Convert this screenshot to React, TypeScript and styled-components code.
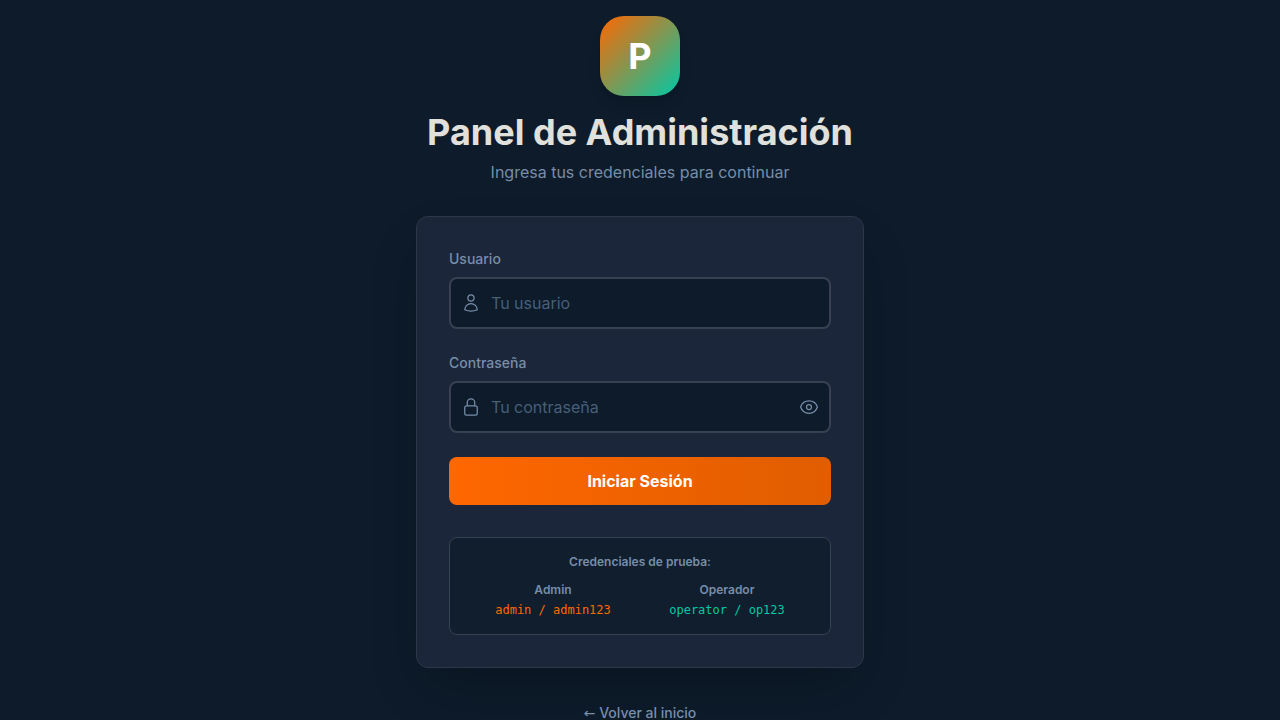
import React, { useState } from "react";
import styled, { createGlobalStyle } from "styled-components";

const GlobalStyle = createGlobalStyle`
  *, *::before, *::after { box-sizing: border-box; }
  body {
    margin: 0;
    background: #0d1b2a;
    color: #e0e1dd;
    font-family: Inter, "Liberation Sans", sans-serif;
    font-size: 16px;
    line-height: 24px;
  }
  h1, p { margin: 0; }
`;

const Page = styled.main`
  min-height: 100vh;
  display: flex;
  align-items: center;
  justify-content: center;
  padding: 16px;
`;

const Content = styled.div`
  width: 100%;
  max-width: 448px;
`;

const Header = styled.header`
  display: flex;
  flex-direction: column;
  align-items: center;
  text-align: center;
  margin-bottom: 32px;
`;

const Logo = styled.div`
  width: 80px;
  height: 80px;
  display: flex;
  align-items: center;
  justify-content: center;
  margin-bottom: 16px;
  border-radius: 24px;
  background: linear-gradient(to bottom right, #ff6700, #00c9a7);
  box-shadow: 0 10px 15px -3px rgba(0, 0, 0, 0.1), 0 4px 6px -4px rgba(0, 0, 0, 0.1);
  color: #ffffff;
  font-size: 36px;
  line-height: 40px;
  font-weight: 700;
`;

const Title = styled.h1`
  margin-bottom: 8px;
  font-size: 36px;
  line-height: 40px;
  font-weight: 700;
`;

const Subtitle = styled.p`
  color: #778da9;
`;

const Card = styled.section`
  padding: 32px;
  border: 1px solid #2d3748;
  border-radius: 12px;
  background: #1b263b;
  box-shadow: 0 25px 50px -12px rgba(0, 0, 0, 0.25);
`;

const Form = styled.form`
  display: flex;
  flex-direction: column;
  gap: 24px;
`;

const Field = styled.div`
  display: flex;
  flex-direction: column;
  gap: 8px;
`;

const Label = styled.label`
  color: #778da9;
  font-size: 14px;
  line-height: 20px;
  font-weight: 500;
`;

const InputBox = styled.div`
  display: flex;
  align-items: center;
  gap: 10px;
  height: 52px;
  padding: 0 10px;
  border: 2px solid #374151;
  border-radius: 8px;
  background: #0d1b2a;
  color: #778da9;
  &:focus-within { border-color: #ff6700; }
`;

const Input = styled.input`
  flex: 1;
  min-width: 0;
  height: 48px;
  padding: 0;
  border: 0;
  outline: 0;
  background: transparent;
  color: #e0e1dd;
  font: inherit;
  &::placeholder { color: #485f78; opacity: 1; }
`;

const IconButton = styled.button`
  display: flex;
  padding: 0;
  border: 0;
  background: transparent;
  color: inherit;
  cursor: pointer;
`;

const Submit = styled.button`
  height: 48px;
  border: 0;
  border-radius: 8px;
  background: linear-gradient(to right, #ff6700, #e05d00);
  color: #ffffff;
  font: inherit;
  font-weight: 700;
  cursor: pointer;
`;

const Hint = styled.div`
  margin-top: 32px;
  padding: 16px;
  border: 1px solid #374151;
  border-radius: 8px;
  background: #111e2d;
  color: #778da9;
  font-size: 12px;
  line-height: 16px;
  font-weight: 600;
  text-align: center;
`;

const Accounts = styled.div`
  display: flex;
  justify-content: space-around;
  margin-top: 12px;
`;

const Account = styled.div`
  display: flex;
  flex-direction: column;
  gap: 4px;
`;

const Credentials = styled.code<{ $color: string }>`
  color: ${({ $color }) => $color};
  font-family: "DejaVu Sans Mono", monospace;
  font-weight: 400;
`;

const Footer = styled.footer`
  margin-top: 32px;
  text-align: center;
`;

const BackLink = styled.a`
  color: #778da9;
  font-size: 14px;
  font-weight: 500;
  text-decoration: none;
`;

const Arrow = styled.span`
  font-family: "DejaVu Sans", sans-serif;
  font-weight: 400;
`;

const IconSvg = styled.svg`
  flex: none;
  width: 20px;
  height: 20px;
`;

const paths = {
  user: "M15.75 6a3.75 3.75 0 1 1-7.5 0 3.75 3.75 0 0 1 7.5 0ZM4.501 20.118a7.5 7.5 0 0 1 14.998 0A17.933 17.933 0 0 1 12 21.75c-2.676 0-5.216-.584-7.499-1.632Z",
  lock: "M16.5 10.5V6.75a4.5 4.5 0 1 0-9 0v3.75m-.75 11.25h10.5a2.25 2.25 0 0 0 2.25-2.25v-6.75a2.25 2.25 0 0 0-2.25-2.25H6.75a2.25 2.25 0 0 0-2.25 2.25v6.75a2.25 2.25 0 0 0 2.25 2.25Z",
  eye: "M2.036 12.322a1.012 1.012 0 0 1 0-.639C3.423 7.51 7.36 4.5 12 4.5c4.638 0 8.573 3.007 9.963 7.178.07.207.07.431 0 .639C20.577 16.49 16.64 19.5 12 19.5c-4.638 0-8.573-3.007-9.963-7.178ZM15 12a3 3 0 1 1-6 0 3 3 0 0 1 6 0Z",
};

function Icon({ name }: { name: keyof typeof paths }) {
  return (
    <IconSvg
      viewBox="0 0 24 24"
      fill="none"
      stroke="currentColor"
      strokeWidth="1.5"
      strokeLinecap="round"
      strokeLinejoin="round"
      aria-hidden="true"
    >
      <path d={paths[name]} />
    </IconSvg>
  );
}

export default function App() {
  const [visible, setVisible] = useState(false);
  return (
    <>
      <GlobalStyle />
      <Page>
        <Content>
          <Header>
            <Logo>P</Logo>
            <Title>Panel de Administración</Title>
            <Subtitle>Ingresa tus credenciales para continuar</Subtitle>
          </Header>
          <Card>
            <Form onSubmit={(e) => e.preventDefault()}>
              <Field>
                <Label htmlFor="username">Usuario</Label>
                <InputBox>
                  <Icon name="user" />
                  <Input id="username" type="text" placeholder="Tu usuario" autoComplete="username" />
                </InputBox>
              </Field>
              <Field>
                <Label htmlFor="password">Contraseña</Label>
                <InputBox>
                  <Icon name="lock" />
                  <Input
                    id="password"
                    type={visible ? "text" : "password"}
                    placeholder="Tu contraseña"
                    autoComplete="current-password"
                  />
                  <IconButton
                    type="button"
                    aria-label="Mostrar contraseña"
                    aria-pressed={visible}
                    onClick={() => setVisible(!visible)}
                  >
                    <Icon name="eye" />
                  </IconButton>
                </InputBox>
              </Field>
              <Submit type="submit">Iniciar Sesión</Submit>
            </Form>
            <Hint>
              <p>Credenciales de prueba:</p>
              <Accounts>
                <Account>
                  <p>Admin</p>
                  <Credentials $color="#ff6700">admin / admin123</Credentials>
                </Account>
                <Account>
                  <p>Operador</p>
                  <Credentials $color="#00c9a7">operator / op123</Credentials>
                </Account>
              </Accounts>
            </Hint>
          </Card>
          <Footer>
            <BackLink href="#"><Arrow>←</Arrow> Volver al inicio</BackLink>
          </Footer>
        </Content>
      </Page>
    </>
  );
}
